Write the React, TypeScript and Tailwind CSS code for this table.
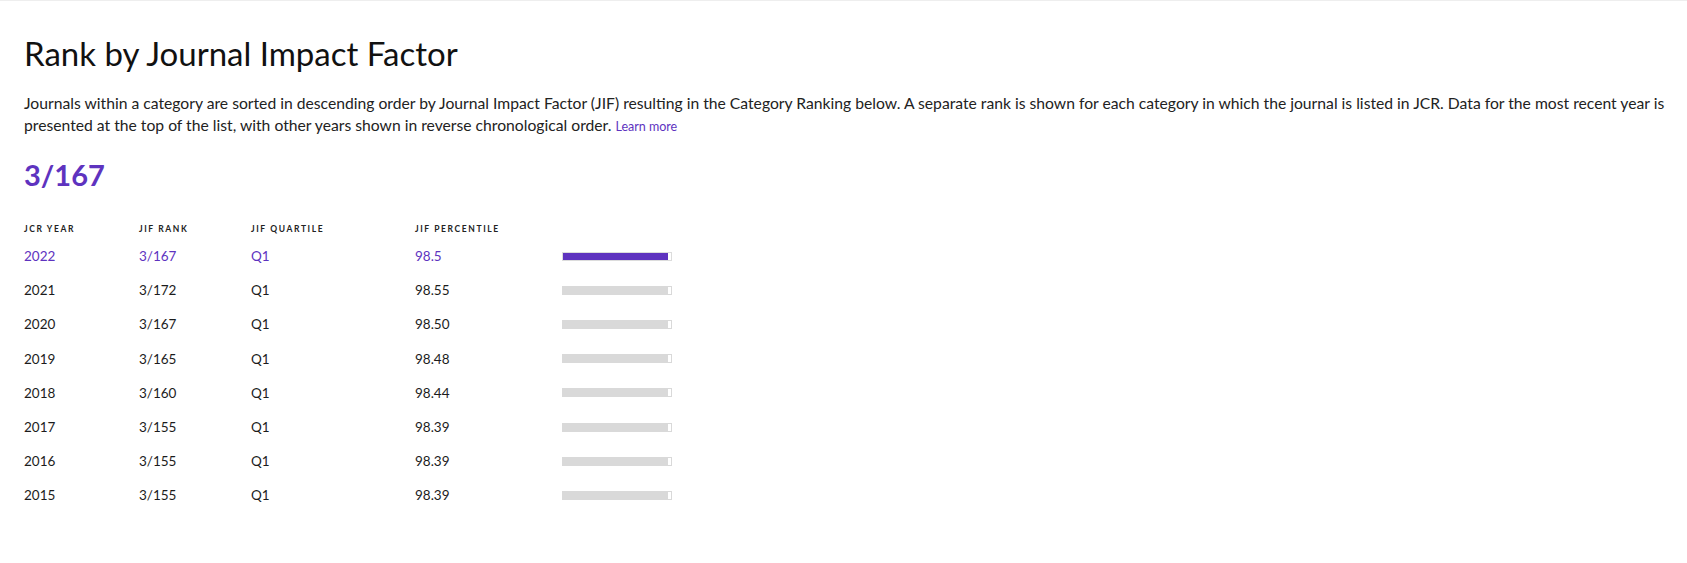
import React from "react";

const rows = [
  { year: "2022", rank: "3/167", q: "Q1", pct: "98.5", v: 98.5, active: true },
  { year: "2021", rank: "3/172", q: "Q1", pct: "98.55", v: 98.55 },
  { year: "2020", rank: "3/167", q: "Q1", pct: "98.50", v: 98.5 },
  { year: "2019", rank: "3/165", q: "Q1", pct: "98.48", v: 98.48 },
  { year: "2018", rank: "3/160", q: "Q1", pct: "98.44", v: 98.44 },
  { year: "2017", rank: "3/155", q: "Q1", pct: "98.39", v: 98.39 },
  { year: "2016", rank: "3/155", q: "Q1", pct: "98.39", v: 98.39 },
  { year: "2015", rank: "3/155", q: "Q1", pct: "98.39", v: 98.39 },
];

export default function App() {
  return (
    <div className="w-[1687px] h-[563px] overflow-hidden bg-white border-t border-[#eeeeee] font-['Lato',sans-serif] text-[#1c1c1c]">
      <div className="pl-[24px] pr-[10px] pt-[29px]">
        <h1 className="text-[33px] leading-[46px] font-normal text-[#111]">Rank by Journal Impact Factor</h1>
        <p className="mt-[16px] text-[15.7px] leading-[22px] text-[#222]">
          <span className="block whitespace-nowrap">
            Journals within a category are sorted in descending order by Journal Impact Factor (JIF) resulting in the Category Ranking below. A separate rank is shown for each category in which the journal is listed in JCR. Data for the most recent year is
          </span>
          <span className="block whitespace-nowrap">
            presented at the top of the list, with other years shown in reverse chronological order.{" "}
            <span className="text-[12.5px] text-[#5e33bf]">Learn more</span>
          </span>
        </p>
        <div className="mt-[17px] text-[29px] leading-[40px] font-bold text-[#5e33bf]">3/167</div>
        <div className="mt-[24px] grid grid-cols-[115px_112px_164px_147px_110px] items-center">
          <div className="h-[20px] flex items-center text-[8.5px] font-bold tracking-[1.6px] text-[#222]">JCR YEAR</div>
          <div className="h-[20px] flex items-center text-[8.5px] font-bold tracking-[1.6px] text-[#222]">JIF RANK</div>
          <div className="h-[20px] flex items-center text-[8.5px] font-bold tracking-[1.6px] text-[#222]">JIF QUARTILE</div>
          <div className="h-[20px] flex items-center text-[8.5px] font-bold tracking-[1.6px] text-[#222]">JIF PERCENTILE</div>
          <div />
          {rows.map((r) => {
            const c = r.active ? "text-[#5e33bf]" : "text-[#1c1c1c]";
            return (
              <React.Fragment key={r.year}>
                <div className={`h-[34.2px] flex items-center text-[13.5px] ${c}`}>{r.year}</div>
                <div className={`h-[34.2px] flex items-center text-[13.5px] ${c}`}>{r.rank}</div>
                <div className={`h-[34.2px] flex items-center text-[13.5px] ${c}`}>{r.q}</div>
                <div className={`h-[34.2px] flex items-center text-[13.5px] ${c}`}>{r.pct}</div>
                <div className="h-[34.2px] flex items-center">
                  <div
                    className={`w-[110px] h-[9px] border ${
                      r.active ? "border-[#dcdcdc]" : "border-[#d9d9d9]"
                    } bg-white`}
                  >
                    <div
                      className={`h-full ${r.active ? "bg-[#5e33bf]" : "bg-[#d9d9d9]"}`}
                      style={{ width: `${r.v - 1.5}%` }}
                    />
                  </div>
                </div>
              </React.Fragment>
            );
          })}
        </div>
      </div>
    </div>
  );
}
